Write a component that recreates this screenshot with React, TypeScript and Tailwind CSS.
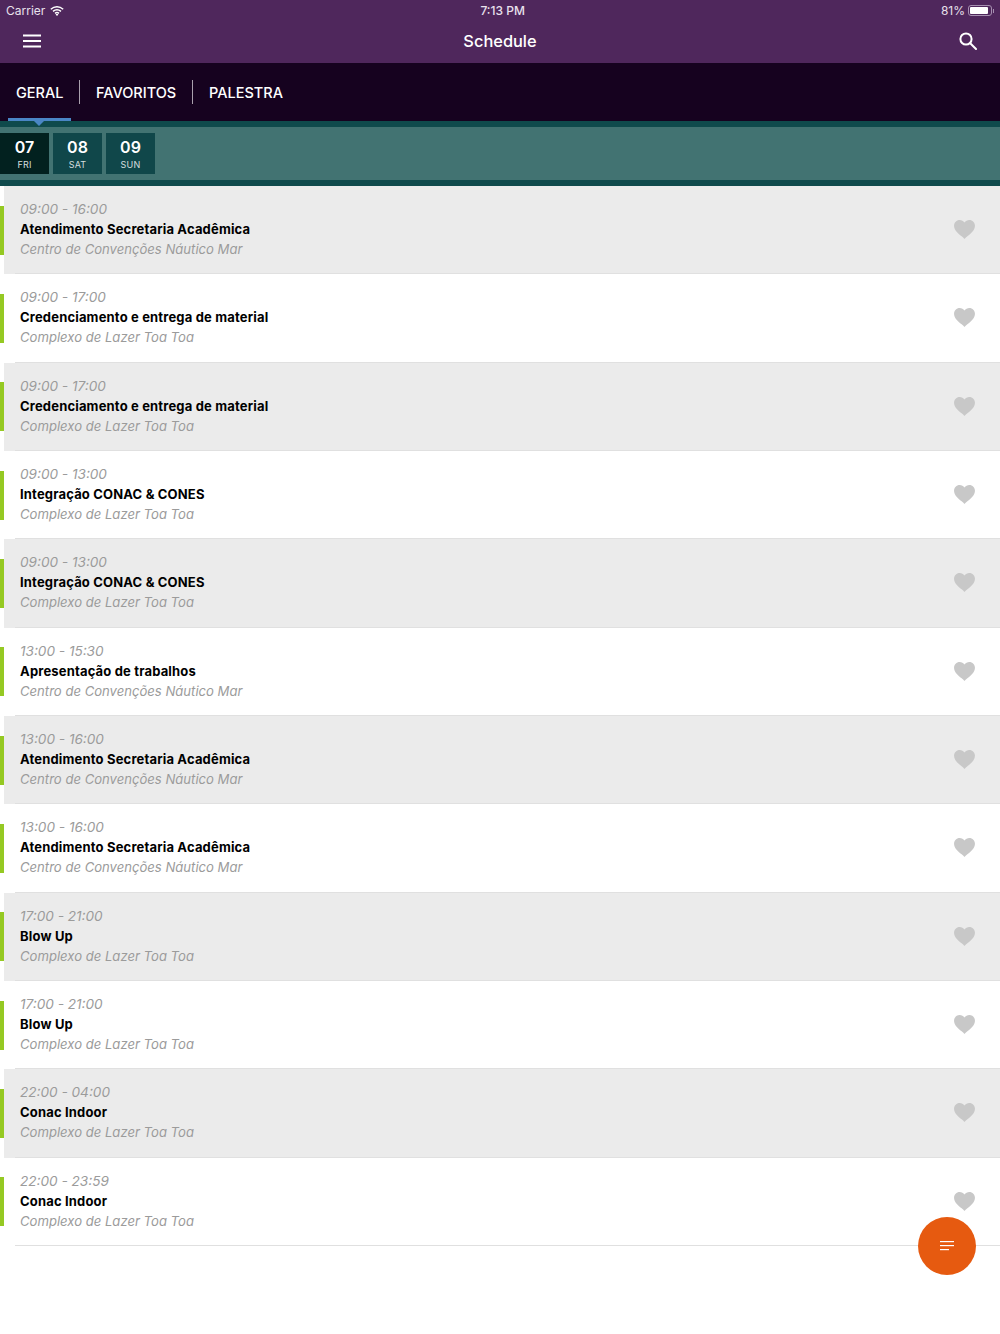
const rows = [
  ["09:00 - 16:00", "Atendimento Secretaria Acadêmica", "Centro de Convenções Náutico Mar"],
  ["09:00 - 17:00", "Credenciamento e entrega de material", "Complexo de Lazer Toa Toa"],
  ["09:00 - 17:00", "Credenciamento e entrega de material", "Complexo de Lazer Toa Toa"],
  ["09:00 - 13:00", "Integração CONAC & CONES", "Complexo de Lazer Toa Toa"],
  ["09:00 - 13:00", "Integração CONAC & CONES", "Complexo de Lazer Toa Toa"],
  ["13:00 - 15:30", "Apresentação de trabalhos", "Centro de Convenções Náutico Mar"],
  ["13:00 - 16:00", "Atendimento Secretaria Acadêmica", "Centro de Convenções Náutico Mar"],
  ["13:00 - 16:00", "Atendimento Secretaria Acadêmica", "Centro de Convenções Náutico Mar"],
  ["17:00 - 21:00", "Blow Up", "Complexo de Lazer Toa Toa"],
  ["17:00 - 21:00", "Blow Up", "Complexo de Lazer Toa Toa"],
  ["22:00 - 04:00", "Conac Indoor", "Complexo de Lazer Toa Toa"],
  ["22:00 - 23:59", "Conac Indoor", "Complexo de Lazer Toa Toa"],
];

function Heart() {
  return (
    <svg width="21" height="19" viewBox="0 0 22 20" className="shrink-0">
      <path d="M11 20 C10.4 19.3 9.4 18.4 8 17.2 C4 13.8 0 10.6 0 6 C0 2.6 2.6 0 5.9 0 C7.9 0 9.9 1 11 2.7 C12.1 1 14.1 0 16.1 0 C19.4 0 22 2.6 22 6 C22 10.6 18 13.8 14 17.2 C12.6 18.4 11.6 19.3 11 20 Z" fill="#c8c8c8" />
    </svg>
  );
}

function Row({ r, i }: { r: string[]; i: number }) {
  return (
    <div className="flex h-[88.33px] items-center">
      <div className="h-[49px] w-1 shrink-0 bg-[#95c923]" />
      <div className={`h-full flex-1 ${i % 2 === 0 ? "bg-[#ebebeb]" : "bg-white"}`}>
        <div className="ml-[11px] flex h-full items-center border-b border-[#e0e0e0] pl-[5px] pr-[25px]">
          <div className="flex-1 pb-[1px]">
            <div className="text-[13.6px] leading-[20px] italic text-[#9b9b9b]">{r[0]}</div>
            <div className="text-[13px] leading-[20px] font-bold tracking-[0.17px] text-black">{r[1]}</div>
            <div className="text-[13.1px] leading-[20px] italic text-[#9b9b9b]">{r[2]}</div>
          </div>
          <Heart />
        </div>
      </div>
    </div>
  );
}

function DateTile({ d, w, active }: { d: string; w: string; active?: boolean }) {
  return (
    <div className={`flex h-[41px] w-[49px] flex-col items-center pt-[4px] text-white ${active ? "bg-[#02211f]" : "bg-[#10474a]"}`}>
      <div className="text-[16px] leading-[20px] font-semibold">{d}</div>
      <div className="mt-[2px] text-[9px] leading-[11px] tracking-[0.2px] text-[#d5dfdf]">{w}</div>
    </div>
  );
}

export default function App() {
  return (
    <div className="relative h-[1334px] w-[1000px] overflow-hidden bg-white font-['Inter','Liberation_Sans',sans-serif]">
      <div className="h-[63px] bg-[#4f275c] text-white">
        <div className="flex h-[20px] items-center justify-between pt-[1px] pl-[6px] pr-[6px] text-[12px] text-[#e9e1ec]">
          <div className="flex items-center gap-[5px]">
            <span>Carrier</span>
            <svg width="14" height="10" viewBox="0 0 14 10" fill="none" stroke="#fff" strokeWidth="1.5">
              <path d="M0.8 3.2 C4.5 0 9.5 0 13.2 3.2" />
              <path d="M3 5.3 C5.3 3.5 8.7 3.5 11 5.3" />
              <path d="M5 7.3 C6.2 6.4 7.8 6.4 9 7.3" />
              <path d="M7 10 L5.6 8.5 C6.4 7.9 7.6 7.9 8.4 8.5 Z" fill="#fff" stroke="none" />
            </svg>
          </div>
          <span className="font-medium">7:13 PM</span>
          <div className="flex items-center gap-[3px]">
            <span>81%</span>
            <div className="flex items-center">
              <div className="flex h-[11px] w-[24px] items-center rounded-[3px] border border-[#a68fb0] p-[1px]">
                <div className="h-full w-[18px] rounded-[1px] bg-white" />
              </div>
              <div className="ml-[1px] h-[4px] w-[1px] bg-[#a68fb0]" />
            </div>
          </div>
        </div>
        <div className="flex h-[43px] items-center justify-between pb-[2px] pl-[23px] pr-[23px]">
          <svg width="18" height="14" viewBox="0 0 18 14" fill="#fff">
            <rect x="0" y="0.5" width="18" height="2" />
            <rect x="0" y="6" width="18" height="2" />
            <rect x="0" y="11.5" width="18" height="2" />
          </svg>
          <span className="mt-[2px] text-[16.4px] font-medium">Schedule</span>
          <svg width="18" height="18" viewBox="0 0 18 18" fill="none" stroke="#fff" strokeWidth="2">
            <circle cx="7" cy="7" r="5.6" />
            <path d="M11.2 11.2 L17 17" strokeLinecap="round" />
          </svg>
        </div>
      </div>

      <div className="relative flex h-[58px] items-center bg-[#16021f] text-[14.5px] font-medium text-white">
        <span className="ml-[16px] w-[63px] pt-[1px]">GERAL</span>
        <div className="h-[24px] w-[1px] bg-[#a9a0ad]" />
        <span className="ml-[16px] w-[96px] pt-[1px]">FAVORITOS</span>
        <div className="h-[24px] w-[1px] bg-[#a9a0ad]" />
        <span className="ml-[16px] pt-[1px]">PALESTRA</span>
        <div className="absolute bottom-0 left-[8px] h-[3px] w-[63px] bg-[#4a86c5]" />
        <div className="absolute top-[58px] left-[34px] z-10 h-0 w-0 border-x-[5px] border-t-[5px] border-x-transparent border-t-[#4a86c5]" />
      </div>

      <div className="flex h-[65px] items-center gap-[4px] border-y-[6px] border-[#0f4a4c] bg-[#427372]">
        <DateTile d="07" w="FRI" active />
        <DateTile d="08" w="SAT" />
        <DateTile d="09" w="SUN" />
      </div>

      <div>
        {rows.map((r, i) => (
          <Row key={i} r={r} i={i} />
        ))}
      </div>

      <div className="absolute top-[1217px] left-[918px] flex h-[58px] w-[58px] items-center justify-center rounded-full bg-[#e65a10]">
        <svg width="14" height="10" viewBox="0 0 14 10" fill="#fff">
          <rect x="0" y="0" width="14" height="1.2" />
          <rect x="0" y="4" width="14" height="1.2" />
          <rect x="0" y="8" width="9" height="1.2" />
        </svg>
      </div>
    </div>
  );
}
